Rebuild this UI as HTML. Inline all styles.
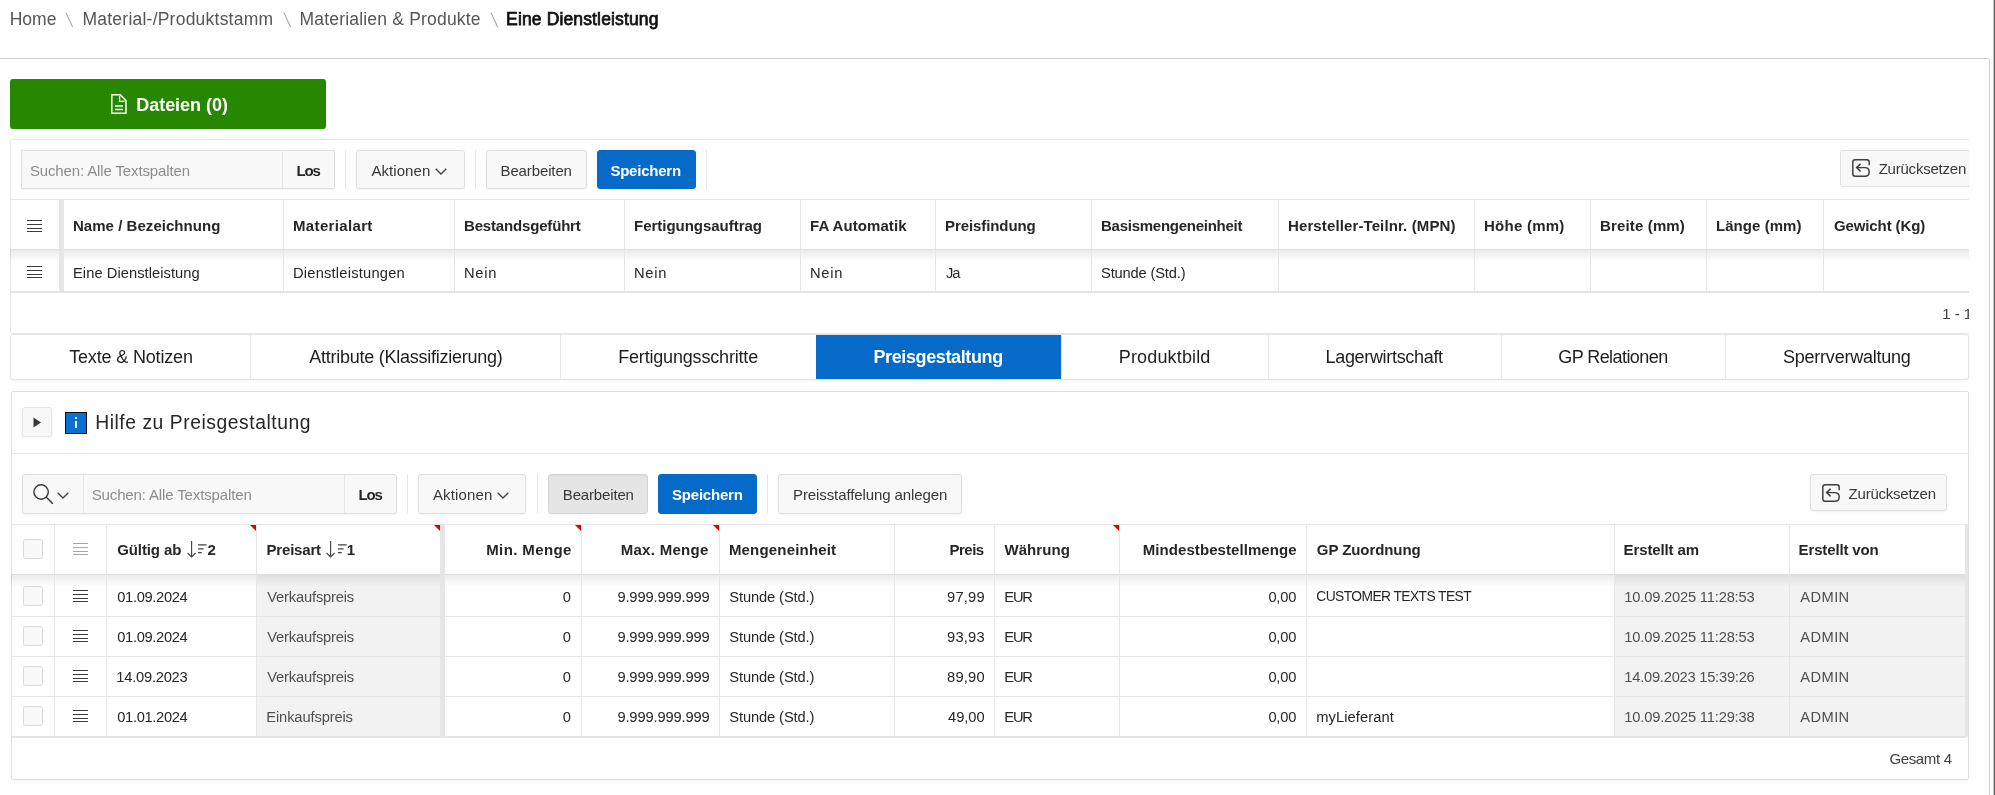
<!DOCTYPE html>
<html><head><meta charset="utf-8"><title>Preisgestaltung</title>
<style>
html,body{margin:0;padding:0;background:#fff;width:1995px;height:795px;overflow:hidden;position:relative;font-family:"Liberation Sans", sans-serif;}
</style></head><body><div style="position:absolute;left:0;top:0;width:1995px;height:795px;overflow:hidden;will-change:transform">
<div style="position:absolute;left:9.70px;top:18.94px;font-size:17.5px;font-weight:400;color:#555555;letter-spacing:0.000px;line-height:0;white-space:nowrap;">Home</div>
<svg style="position:absolute;left:65px;top:12px;overflow:visible" width="9" height="16" viewBox="0 0 9 16"><path d="M1 0.8 L7.6 15" stroke="#a9a9a9" stroke-width="1.1"/></svg>
<div style="position:absolute;left:82.50px;top:18.94px;font-size:17.5px;font-weight:400;color:#555555;letter-spacing:0.229px;line-height:0;white-space:nowrap;">Material-/Produktstamm</div>
<svg style="position:absolute;left:282.5px;top:12px;overflow:visible" width="9" height="16" viewBox="0 0 9 16"><path d="M1 0.8 L7.6 15" stroke="#a9a9a9" stroke-width="1.1"/></svg>
<div style="position:absolute;left:299.50px;top:18.94px;font-size:17.5px;font-weight:400;color:#555555;letter-spacing:0.190px;line-height:0;white-space:nowrap;">Materialien &amp; Produkte</div>
<svg style="position:absolute;left:489.5px;top:12px;overflow:visible" width="9" height="16" viewBox="0 0 9 16"><path d="M1 0.8 L7.6 15" stroke="#a9a9a9" stroke-width="1.1"/></svg>
<div style="position:absolute;left:506.10px;top:18.94px;font-size:17.5px;font-weight:400;color:#111111;letter-spacing:0.139px;line-height:0;white-space:nowrap;-webkit-text-stroke:0.75px #111;">Eine Dienstleistung</div>
<div style="position:absolute;left:-10px;top:58px;width:2000px;height:900px;border:1px solid #d0d0d0;border-radius:2px;box-sizing:border-box;"></div>
<div style="position:absolute;left:1993px;top:0px;width:1px;height:795px;background:#c8c8c8;"></div>
<div style="position:absolute;left:1994px;top:0px;width:1px;height:795px;background:#5a5a5a;"></div>
<div style="position:absolute;left:10px;top:79px;width:316px;height:50px;background:#278701;border-radius:3px;"></div>
<svg style="position:absolute;left:110px;top:93px;overflow:visible" width="18" height="22" viewBox="0 0 18 22"><path d="M1.8 1.8 H10.2 L16 7.6 V20.2 H1.8 Z" fill="none" stroke="#fff" stroke-width="1.5" stroke-linejoin="round"/>
<path d="M9.6 3.2 V8.3 H14.5" fill="none" stroke="#fff" stroke-width="1.3"/>
<path d="M5 13 H13 M5 16.6 H13" stroke="#fff" stroke-width="1.5"/></svg>
<div style="position:absolute;left:136.20px;top:104.76px;font-size:18px;font-weight:700;color:#ffffff;letter-spacing:-0.020px;line-height:0;white-space:nowrap;">Dateien (0)</div>
<div style="position:absolute;left:0;top:0;width:1969px;height:795px;overflow:hidden"><div style="position:absolute;left:10px;top:139px;width:1979px;height:195px;border:1px solid #e6e6e6;border-radius:3px;box-sizing:border-box;"></div></div>
<div style="position:absolute;left:21px;top:150px;width:314px;height:39px;background:#f8f8f8;border:1px solid #dfdfdf;border-radius:3px;box-sizing:border-box;box-shadow:0 1px 2px rgba(0,0,0,.05);border-radius:1px;"></div>
<div style="position:absolute;left:282px;top:151px;width:1px;height:37px;background:#e6e6e6;"></div>
<div style="position:absolute;left:29.90px;top:171.00px;font-size:15px;font-weight:400;color:#8c8c8c;letter-spacing:-0.130px;line-height:0;white-space:nowrap;">Suchen: Alle Textspalten</div>
<div style="position:absolute;left:296.50px;top:171.00px;font-size:15px;font-weight:700;color:#262626;letter-spacing:-1.200px;line-height:0;white-space:nowrap;">Los</div>
<div style="position:absolute;left:345px;top:150px;width:1px;height:39px;background:#e6e6e6;"></div>
<div style="position:absolute;left:356px;top:150px;width:109px;height:39px;background:#f8f8f8;border:1px solid #dfdfdf;border-radius:3px;box-sizing:border-box;box-shadow:0 1px 2px rgba(0,0,0,.05);"></div>
<div style="position:absolute;left:371.40px;top:171.00px;font-size:15px;font-weight:400;color:#383838;letter-spacing:0.071px;line-height:0;white-space:nowrap;">Aktionen</div>
<svg style="position:absolute;left:435px;top:168px;overflow:visible" width="12" height="7" viewBox="0 0 12 7"><path d="M0.7 0.7 L6 6 L11.3 0.7" fill="none" stroke="#404040" stroke-width="1.3"/></svg>
<div style="position:absolute;left:475px;top:150px;width:1px;height:39px;background:#e6e6e6;"></div>
<div style="position:absolute;left:486px;top:150px;width:101px;height:39px;background:#f8f8f8;border:1px solid #dfdfdf;border-radius:3px;box-sizing:border-box;box-shadow:0 1px 2px rgba(0,0,0,.05);"></div>
<div style="position:absolute;left:500.50px;top:171.00px;font-size:15px;font-weight:400;color:#383838;letter-spacing:-0.122px;line-height:0;white-space:nowrap;">Bearbeiten</div>
<div style="position:absolute;left:597px;top:150px;width:99px;height:39px;background:#056ac8;border:1px solid #056ac8;border-radius:3px;box-sizing:border-box;box-shadow:0 1px 2px rgba(0,0,0,.05);"></div>
<div style="position:absolute;left:610.40px;top:171.00px;font-size:15px;font-weight:700;color:#ffffff;letter-spacing:-0.225px;line-height:0;white-space:nowrap;">Speichern</div>
<div style="position:absolute;left:706px;top:150px;width:1px;height:39px;background:#e6e6e6;"></div>
<div style="position:absolute;left:1840px;top:150px;width:129px;height:37px;overflow:hidden"><div style="position:absolute;left:0;top:0;width:145px;height:37px;background:#f8f8f8;border:1px solid #dfdfdf;border-radius:3px;box-sizing:border-box;"></div></div>
<svg style="position:absolute;left:1852px;top:159px;overflow:visible" width="18" height="18" viewBox="0 0 18 18"><path d="M17.2 6.2 V3.3 Q17.2 0.8 14.7 0.8 H3.3 Q0.8 0.8 0.8 3.3 V14.7 Q0.8 17.2 3.3 17.2 H12.9 Q17.2 17.2 17.2 12.9 Q17.2 8.6 12.9 8.6 H4.6" fill="none" stroke="#3e3e3e" stroke-width="1.45"/>
<path d="M8.6 4.9 L4.6 8.6 L8.6 12.4" fill="none" stroke="#3e3e3e" stroke-width="1.45"/></svg>
<div style="position:absolute;left:1878.70px;top:168.80px;font-size:15px;font-weight:400;color:#383838;letter-spacing:-0.227px;line-height:0;white-space:nowrap;">Zurücksetzen</div>
<div style="position:absolute;left:10px;top:199px;width:1959px;height:1px;background:#e6e6e6;"></div>
<div style="position:absolute;left:10px;top:250px;width:1959px;height:12px;background:linear-gradient(rgba(0,0,0,.08),rgba(0,0,0,0));"></div>
<div style="position:absolute;left:10px;top:249px;width:1959px;height:1px;background:#dedede;"></div>
<div style="position:absolute;left:59px;top:200px;width:5px;height:92px;background:#e6e6e6;"></div>
<div style="position:absolute;left:27px;top:220px;width:15px;height:1.4px;background:#3c3c3c;"></div>
<div style="position:absolute;left:27px;top:224px;width:15px;height:1.4px;background:#3c3c3c;"></div>
<div style="position:absolute;left:27px;top:228px;width:15px;height:1.4px;background:#3c3c3c;"></div>
<div style="position:absolute;left:27px;top:231px;width:15px;height:1.4px;background:#3c3c3c;"></div>
<div style="position:absolute;left:27px;top:266px;width:15px;height:1.4px;background:#3c3c3c;"></div>
<div style="position:absolute;left:27px;top:270px;width:15px;height:1.4px;background:#3c3c3c;"></div>
<div style="position:absolute;left:27px;top:274px;width:15px;height:1.4px;background:#3c3c3c;"></div>
<div style="position:absolute;left:27px;top:277px;width:15px;height:1.4px;background:#3c3c3c;"></div>
<div style="position:absolute;left:73.00px;top:225.80px;font-size:15px;font-weight:700;color:#262626;letter-spacing:0.035px;line-height:0;white-space:nowrap;">Name / Bezeichnung</div>
<div style="position:absolute;left:73.00px;top:272.61px;font-size:14.7px;font-weight:400;color:#262626;letter-spacing:0.050px;line-height:0;white-space:nowrap;">Eine Dienstleistung</div>
<div style="position:absolute;left:283px;top:200px;width:1px;height:92px;background:#e6e6e6;"></div>
<div style="position:absolute;left:293.00px;top:225.80px;font-size:15px;font-weight:700;color:#262626;letter-spacing:0.350px;line-height:0;white-space:nowrap;">Materialart</div>
<div style="position:absolute;left:293.00px;top:272.61px;font-size:14.7px;font-weight:400;color:#262626;letter-spacing:0.207px;line-height:0;white-space:nowrap;">Dienstleistungen</div>
<div style="position:absolute;left:454px;top:200px;width:1px;height:92px;background:#e6e6e6;"></div>
<div style="position:absolute;left:464.00px;top:225.80px;font-size:15px;font-weight:700;color:#262626;letter-spacing:-0.171px;line-height:0;white-space:nowrap;">Bestandsgeführt</div>
<div style="position:absolute;left:464.00px;top:272.61px;font-size:14.7px;font-weight:400;color:#262626;letter-spacing:0.767px;line-height:0;white-space:nowrap;">Nein</div>
<div style="position:absolute;left:624px;top:200px;width:1px;height:92px;background:#e6e6e6;"></div>
<div style="position:absolute;left:634.00px;top:225.80px;font-size:15px;font-weight:700;color:#262626;letter-spacing:-0.025px;line-height:0;white-space:nowrap;">Fertigungsauftrag</div>
<div style="position:absolute;left:634.00px;top:272.61px;font-size:14.7px;font-weight:400;color:#262626;letter-spacing:0.767px;line-height:0;white-space:nowrap;">Nein</div>
<div style="position:absolute;left:800px;top:200px;width:1px;height:92px;background:#e6e6e6;"></div>
<div style="position:absolute;left:810.00px;top:225.80px;font-size:15px;font-weight:700;color:#262626;letter-spacing:0.091px;line-height:0;white-space:nowrap;">FA Automatik</div>
<div style="position:absolute;left:810.00px;top:272.61px;font-size:14.7px;font-weight:400;color:#262626;letter-spacing:0.767px;line-height:0;white-space:nowrap;">Nein</div>
<div style="position:absolute;left:935px;top:200px;width:1px;height:92px;background:#e6e6e6;"></div>
<div style="position:absolute;left:945.00px;top:225.80px;font-size:15px;font-weight:700;color:#262626;letter-spacing:-0.082px;line-height:0;white-space:nowrap;">Preisfindung</div>
<div style="position:absolute;left:946.00px;top:272.61px;font-size:14.7px;font-weight:400;color:#262626;letter-spacing:-1.200px;line-height:0;white-space:nowrap;">Ja</div>
<div style="position:absolute;left:1091px;top:200px;width:1px;height:92px;background:#e6e6e6;"></div>
<div style="position:absolute;left:1101.00px;top:225.80px;font-size:15px;font-weight:700;color:#262626;letter-spacing:-0.259px;line-height:0;white-space:nowrap;">Basismengeneinheit</div>
<div style="position:absolute;left:1101.00px;top:272.61px;font-size:14.7px;font-weight:400;color:#262626;letter-spacing:-0.167px;line-height:0;white-space:nowrap;">Stunde (Std.)</div>
<div style="position:absolute;left:1278px;top:200px;width:1px;height:92px;background:#e6e6e6;"></div>
<div style="position:absolute;left:1288.00px;top:225.80px;font-size:15px;font-weight:700;color:#262626;letter-spacing:0.117px;line-height:0;white-space:nowrap;">Hersteller-Teilnr. (MPN)</div>
<div style="position:absolute;left:1474px;top:200px;width:1px;height:92px;background:#e6e6e6;"></div>
<div style="position:absolute;left:1484.00px;top:225.80px;font-size:15px;font-weight:700;color:#262626;letter-spacing:0.250px;line-height:0;white-space:nowrap;">Höhe (mm)</div>
<div style="position:absolute;left:1590px;top:200px;width:1px;height:92px;background:#e6e6e6;"></div>
<div style="position:absolute;left:1600.00px;top:225.80px;font-size:15px;font-weight:700;color:#262626;letter-spacing:0.150px;line-height:0;white-space:nowrap;">Breite (mm)</div>
<div style="position:absolute;left:1706px;top:200px;width:1px;height:92px;background:#e6e6e6;"></div>
<div style="position:absolute;left:1716.00px;top:225.80px;font-size:15px;font-weight:700;color:#262626;letter-spacing:0.056px;line-height:0;white-space:nowrap;">Länge (mm)</div>
<div style="position:absolute;left:1823px;top:200px;width:1px;height:92px;background:#e6e6e6;"></div>
<div style="position:absolute;left:1834.00px;top:225.80px;font-size:15px;font-weight:700;color:#262626;letter-spacing:-0.118px;line-height:0;white-space:nowrap;">Gewicht (Kg)</div>
<div style="position:absolute;left:10px;top:291px;width:1959px;height:2px;background:#e4e4e4;"></div>
<div style="position:absolute;left:1942.20px;top:313.80px;font-size:15px;font-weight:400;color:#404040;letter-spacing:0.000px;line-height:0;white-space:nowrap;">1 - 1</div>
<div style="position:absolute;left:1969px;top:300px;width:19px;height:30px;background:#fff;"></div>
<div style="position:absolute;left:10px;top:334px;width:1959px;height:46px;border:1px solid #e6e6e6;border-radius:3px;box-sizing:border-box;background:#fff;box-shadow:0 1px 2px rgba(0,0,0,.05)"></div>
<div style="position:absolute;left:69.20px;top:356.56px;font-size:18px;font-weight:400;color:#1e1e1e;letter-spacing:-0.164px;line-height:0;white-space:nowrap;">Texte &amp; Notizen</div>
<div style="position:absolute;left:250px;top:335px;width:1px;height:44px;background:#e6e6e6;"></div>
<div style="position:absolute;left:309.20px;top:356.56px;font-size:18px;font-weight:400;color:#1e1e1e;letter-spacing:-0.250px;line-height:0;white-space:nowrap;">Attribute (Klassifizierung)</div>
<div style="position:absolute;left:560px;top:335px;width:1px;height:44px;background:#e6e6e6;"></div>
<div style="position:absolute;left:618.20px;top:356.56px;font-size:18px;font-weight:400;color:#1e1e1e;letter-spacing:-0.182px;line-height:0;white-space:nowrap;">Fertigungsschritte</div>
<div style="position:absolute;left:816px;top:335px;width:245px;height:44px;background:#056ac8;"></div>
<div style="position:absolute;left:873.50px;top:356.56px;font-size:18px;font-weight:700;color:#ffffff;letter-spacing:-0.386px;line-height:0;white-space:nowrap;">Preisgestaltung</div>
<div style="position:absolute;left:1061px;top:335px;width:1px;height:44px;background:#e6e6e6;"></div>
<div style="position:absolute;left:1118.80px;top:356.56px;font-size:18px;font-weight:400;color:#1e1e1e;letter-spacing:0.150px;line-height:0;white-space:nowrap;">Produktbild</div>
<div style="position:absolute;left:1268px;top:335px;width:1px;height:44px;background:#e6e6e6;"></div>
<div style="position:absolute;left:1325.50px;top:356.56px;font-size:18px;font-weight:400;color:#1e1e1e;letter-spacing:-0.321px;line-height:0;white-space:nowrap;">Lagerwirtschaft</div>
<div style="position:absolute;left:1501px;top:335px;width:1px;height:44px;background:#e6e6e6;"></div>
<div style="position:absolute;left:1558.20px;top:356.56px;font-size:18px;font-weight:400;color:#1e1e1e;letter-spacing:-0.558px;line-height:0;white-space:nowrap;">GP Relationen</div>
<div style="position:absolute;left:1725px;top:335px;width:1px;height:44px;background:#e6e6e6;"></div>
<div style="position:absolute;left:1783.00px;top:356.56px;font-size:18px;font-weight:400;color:#1e1e1e;letter-spacing:-0.229px;line-height:0;white-space:nowrap;">Sperrverwaltung</div>
<div style="position:absolute;left:11px;top:391px;width:1958px;height:389px;border:1px solid #e0e0e0;border-radius:2px;box-sizing:border-box;background:#fff;box-shadow:0 1px 3px rgba(0,0,0,.06)"></div>
<div style="position:absolute;left:22px;top:407px;width:30px;height:30px;background:#f8f8f8;border:1px solid #e4e4e4;border-radius:3px;box-sizing:border-box;box-shadow:0 1px 2px rgba(0,0,0,.05);"></div>
<svg style="position:absolute;left:33px;top:417px;overflow:visible" width="9" height="11" viewBox="0 0 9 11"><path d="M0.5 0.5 L8 5.5 L0.5 10.5 Z" fill="#383838"/></svg>
<div style="position:absolute;left:64.5px;top:411.8px;width:22.5px;height:22px;background:#0a70d6;border:1.6px solid #111;box-sizing:border-box;"></div>
<div style="position:absolute;left:75.1px;top:417.3px;width:1.5px;height:1.6px;background:#fff;"></div>
<div style="position:absolute;left:75.1px;top:420.6px;width:1.5px;height:7.2px;background:#fff;"></div>
<div style="position:absolute;left:95.20px;top:423.11px;font-size:19.3px;font-weight:400;color:#262626;letter-spacing:0.552px;line-height:0;white-space:nowrap;">Hilfe zu Preisgestaltung</div>
<div style="position:absolute;left:11px;top:453px;width:1958px;height:1px;background:#e6e6e6;"></div>
<div style="position:absolute;left:22px;top:474px;width:375px;height:39.5px;background:#f8f8f8;border:1px solid #dfdfdf;border-radius:3px;box-sizing:border-box;box-shadow:0 1px 2px rgba(0,0,0,.05);"></div>
<div style="position:absolute;left:83px;top:475px;width:1px;height:37.5px;background:#e6e6e6;"></div>
<div style="position:absolute;left:344px;top:475px;width:1px;height:37.5px;background:#e6e6e6;"></div>
<svg style="position:absolute;left:31px;top:483px;overflow:visible" width="24" height="22" viewBox="0 0 24 22"><circle cx="10.1" cy="9" r="7.2" fill="none" stroke="#383838" stroke-width="1.4"/><path d="M15.4 14.3 L21.8 20.7" stroke="#383838" stroke-width="1.5"/></svg>
<svg style="position:absolute;left:57.2px;top:491.7px;overflow:visible" width="12" height="7" viewBox="0 0 12 7"><path d="M0.7 0.7 L6 6 L11.3 0.7" fill="none" stroke="#404040" stroke-width="1.3"/></svg>
<div style="position:absolute;left:91.70px;top:494.80px;font-size:15px;font-weight:400;color:#8c8c8c;letter-spacing:-0.135px;line-height:0;white-space:nowrap;">Suchen: Alle Textspalten</div>
<div style="position:absolute;left:358.60px;top:494.80px;font-size:15px;font-weight:700;color:#262626;letter-spacing:-1.200px;line-height:0;white-space:nowrap;">Los</div>
<div style="position:absolute;left:407px;top:474px;width:1px;height:39px;background:#e6e6e6;"></div>
<div style="position:absolute;left:418px;top:474px;width:108px;height:39.6px;background:#f8f8f8;border:1px solid #dfdfdf;border-radius:3px;box-sizing:border-box;box-shadow:0 1px 2px rgba(0,0,0,.05);"></div>
<div style="position:absolute;left:432.90px;top:494.70px;font-size:15px;font-weight:400;color:#383838;letter-spacing:0.143px;line-height:0;white-space:nowrap;">Aktionen</div>
<svg style="position:absolute;left:496.5px;top:491.5px;overflow:visible" width="12" height="7" viewBox="0 0 12 7"><path d="M0.7 0.7 L6 6 L11.3 0.7" fill="none" stroke="#404040" stroke-width="1.3"/></svg>
<div style="position:absolute;left:537px;top:474px;width:1px;height:39px;background:#e6e6e6;"></div>
<div style="position:absolute;left:548px;top:474px;width:100px;height:39.6px;background:#e5e5e5;border:1px solid #d4d4d4;border-radius:3px;box-sizing:border-box;box-shadow:0 1px 2px rgba(0,0,0,.05);box-shadow:inset 0 1px 1px rgba(0,0,0,.05);"></div>
<div style="position:absolute;left:562.80px;top:494.70px;font-size:15px;font-weight:400;color:#383838;letter-spacing:-0.156px;line-height:0;white-space:nowrap;">Bearbeiten</div>
<div style="position:absolute;left:658px;top:474px;width:99px;height:39.6px;background:#056ac8;border:1px solid #056ac8;border-radius:3px;box-sizing:border-box;box-shadow:0 1px 2px rgba(0,0,0,.05);"></div>
<div style="position:absolute;left:672.10px;top:494.70px;font-size:15px;font-weight:700;color:#ffffff;letter-spacing:-0.225px;line-height:0;white-space:nowrap;">Speichern</div>
<div style="position:absolute;left:767px;top:474px;width:1px;height:39px;background:#e6e6e6;"></div>
<div style="position:absolute;left:778px;top:474px;width:184px;height:39.6px;background:#f8f8f8;border:1px solid #dfdfdf;border-radius:3px;box-sizing:border-box;box-shadow:0 1px 2px rgba(0,0,0,.05);"></div>
<div style="position:absolute;left:793.00px;top:494.80px;font-size:15px;font-weight:400;color:#383838;letter-spacing:-0.100px;line-height:0;white-space:nowrap;">Preisstaffelung anlegen</div>
<div style="position:absolute;left:1810px;top:474px;width:137px;height:37px;background:#f8f8f8;border:1px solid #dfdfdf;border-radius:3px;box-sizing:border-box;box-shadow:0 1px 2px rgba(0,0,0,.05);"></div>
<svg style="position:absolute;left:1822px;top:484px;overflow:visible" width="18" height="18" viewBox="0 0 18 18"><path d="M17.2 6.2 V3.3 Q17.2 0.8 14.7 0.8 H3.3 Q0.8 0.8 0.8 3.3 V14.7 Q0.8 17.2 3.3 17.2 H12.9 Q17.2 17.2 17.2 12.9 Q17.2 8.6 12.9 8.6 H4.6" fill="none" stroke="#3e3e3e" stroke-width="1.45"/>
<path d="M8.6 4.9 L4.6 8.6 L8.6 12.4" fill="none" stroke="#3e3e3e" stroke-width="1.45"/></svg>
<div style="position:absolute;left:1848.60px;top:493.60px;font-size:15px;font-weight:400;color:#383838;letter-spacing:-0.236px;line-height:0;white-space:nowrap;">Zurücksetzen</div>
<div style="position:absolute;left:11px;top:524px;width:1958px;height:1px;background:#e6e6e6;"></div>
<div style="position:absolute;left:256px;top:575px;width:184px;height:162px;background:#f2f2f2;"></div>
<div style="position:absolute;left:1614px;top:575px;width:175px;height:162px;background:#f2f2f2;"></div>
<div style="position:absolute;left:1789px;top:575px;width:176px;height:162px;background:#f2f2f2;"></div>
<div style="position:absolute;left:11px;top:575px;width:1955px;height:12px;background:linear-gradient(rgba(0,0,0,.08),rgba(0,0,0,0));"></div>
<div style="position:absolute;left:11px;top:574px;width:1955px;height:1px;background:#dedede;"></div>
<div style="position:absolute;left:11px;top:616px;width:1955px;height:1px;background:#e6e6e6;"></div>
<div style="position:absolute;left:11px;top:656px;width:1955px;height:1px;background:#e6e6e6;"></div>
<div style="position:absolute;left:11px;top:696px;width:1955px;height:1px;background:#e6e6e6;"></div>
<div style="position:absolute;left:11px;top:736px;width:1955px;height:2px;background:#e4e4e4;"></div>
<div style="position:absolute;left:54px;top:525px;width:1px;height:212px;background:#e6e6e6;"></div>
<div style="position:absolute;left:106px;top:525px;width:1px;height:212px;background:#e6e6e6;"></div>
<div style="position:absolute;left:440px;top:525px;width:5px;height:212px;background:#e6e6e6;"></div>
<div style="position:absolute;left:256px;top:525px;width:1px;height:212px;background:#e6e6e6;"></div>
<div style="position:absolute;left:581px;top:525px;width:1px;height:212px;background:#e6e6e6;"></div>
<div style="position:absolute;left:719px;top:525px;width:1px;height:212px;background:#e6e6e6;"></div>
<div style="position:absolute;left:894px;top:525px;width:1px;height:212px;background:#e6e6e6;"></div>
<div style="position:absolute;left:994px;top:525px;width:1px;height:212px;background:#e6e6e6;"></div>
<div style="position:absolute;left:1119px;top:525px;width:1px;height:212px;background:#e6e6e6;"></div>
<div style="position:absolute;left:1306px;top:525px;width:1px;height:212px;background:#e6e6e6;"></div>
<div style="position:absolute;left:1614px;top:525px;width:1px;height:212px;background:#e6e6e6;"></div>
<div style="position:absolute;left:1789px;top:525px;width:1px;height:212px;background:#e6e6e6;"></div>
<div style="position:absolute;left:1965px;top:525px;width:3px;height:212px;background:#e6e6e6;"></div>
<div style="position:absolute;left:23px;top:539px;width:20px;height:20px;background:#f8f8f8;border:1px solid #d8d8d8;border-radius:2.5px;box-sizing:border-box;"></div>
<div style="position:absolute;left:73px;top:543px;width:15px;height:1.4px;background:#a6a6a6;"></div>
<div style="position:absolute;left:73px;top:547px;width:15px;height:1.4px;background:#a6a6a6;"></div>
<div style="position:absolute;left:73px;top:551px;width:15px;height:1.4px;background:#a6a6a6;"></div>
<div style="position:absolute;left:73px;top:554px;width:15px;height:1.4px;background:#a6a6a6;"></div>
<div style="position:absolute;left:23px;top:586px;width:20px;height:20px;background:#f8f8f8;border:1px solid #d8d8d8;border-radius:2.5px;box-sizing:border-box;"></div>
<div style="position:absolute;left:73px;top:590px;width:15px;height:1.4px;background:#3c3c3c;"></div>
<div style="position:absolute;left:73px;top:594px;width:15px;height:1.4px;background:#3c3c3c;"></div>
<div style="position:absolute;left:73px;top:598px;width:15px;height:1.4px;background:#3c3c3c;"></div>
<div style="position:absolute;left:73px;top:601px;width:15px;height:1.4px;background:#3c3c3c;"></div>
<div style="position:absolute;left:23px;top:626px;width:20px;height:20px;background:#f8f8f8;border:1px solid #d8d8d8;border-radius:2.5px;box-sizing:border-box;"></div>
<div style="position:absolute;left:73px;top:630px;width:15px;height:1.4px;background:#3c3c3c;"></div>
<div style="position:absolute;left:73px;top:634px;width:15px;height:1.4px;background:#3c3c3c;"></div>
<div style="position:absolute;left:73px;top:638px;width:15px;height:1.4px;background:#3c3c3c;"></div>
<div style="position:absolute;left:73px;top:641px;width:15px;height:1.4px;background:#3c3c3c;"></div>
<div style="position:absolute;left:23px;top:666px;width:20px;height:20px;background:#f8f8f8;border:1px solid #d8d8d8;border-radius:2.5px;box-sizing:border-box;"></div>
<div style="position:absolute;left:73px;top:670px;width:15px;height:1.4px;background:#3c3c3c;"></div>
<div style="position:absolute;left:73px;top:674px;width:15px;height:1.4px;background:#3c3c3c;"></div>
<div style="position:absolute;left:73px;top:678px;width:15px;height:1.4px;background:#3c3c3c;"></div>
<div style="position:absolute;left:73px;top:681px;width:15px;height:1.4px;background:#3c3c3c;"></div>
<div style="position:absolute;left:23px;top:706px;width:20px;height:20px;background:#f8f8f8;border:1px solid #d8d8d8;border-radius:2.5px;box-sizing:border-box;"></div>
<div style="position:absolute;left:73px;top:710px;width:15px;height:1.4px;background:#3c3c3c;"></div>
<div style="position:absolute;left:73px;top:714px;width:15px;height:1.4px;background:#3c3c3c;"></div>
<div style="position:absolute;left:73px;top:718px;width:15px;height:1.4px;background:#3c3c3c;"></div>
<div style="position:absolute;left:73px;top:721px;width:15px;height:1.4px;background:#3c3c3c;"></div>
<div style="position:absolute;left:117.20px;top:550.00px;font-size:15px;font-weight:700;color:#262626;letter-spacing:-0.100px;line-height:0;white-space:nowrap;">Gültig ab</div>
<div style="position:absolute;left:266.50px;top:550.00px;font-size:15px;font-weight:700;color:#262626;letter-spacing:-0.186px;line-height:0;white-space:nowrap;">Preisart</div>
<div style="position:absolute;left:486.20px;top:550.00px;font-size:15px;font-weight:700;color:#262626;letter-spacing:0.400px;line-height:0;white-space:nowrap;">Min. Menge</div>
<div style="position:absolute;left:620.70px;top:550.00px;font-size:15px;font-weight:700;color:#262626;letter-spacing:0.289px;line-height:0;white-space:nowrap;">Max. Menge</div>
<div style="position:absolute;left:728.90px;top:550.00px;font-size:15px;font-weight:700;color:#262626;letter-spacing:0.183px;line-height:0;white-space:nowrap;">Mengeneinheit</div>
<div style="position:absolute;left:949.40px;top:550.00px;font-size:15px;font-weight:700;color:#262626;letter-spacing:-0.475px;line-height:0;white-space:nowrap;">Preis</div>
<div style="position:absolute;left:1004.40px;top:550.00px;font-size:15px;font-weight:700;color:#262626;letter-spacing:0.100px;line-height:0;white-space:nowrap;">Währung</div>
<div style="position:absolute;left:1142.80px;top:550.00px;font-size:15px;font-weight:700;color:#262626;letter-spacing:0.067px;line-height:0;white-space:nowrap;">Mindestbestellmenge</div>
<div style="position:absolute;left:1316.80px;top:550.00px;font-size:15px;font-weight:700;color:#262626;letter-spacing:-0.073px;line-height:0;white-space:nowrap;">GP Zuordnung</div>
<div style="position:absolute;left:1623.60px;top:550.00px;font-size:15px;font-weight:700;color:#262626;letter-spacing:-0.120px;line-height:0;white-space:nowrap;">Erstellt am</div>
<div style="position:absolute;left:1798.60px;top:550.00px;font-size:15px;font-weight:700;color:#262626;letter-spacing:-0.145px;line-height:0;white-space:nowrap;">Erstellt von</div>
<svg style="position:absolute;left:186.8px;top:541px;overflow:visible" width="10" height="17" viewBox="0 0 10 17"><path d="M4.6 0 V16 M0.6 12 L4.6 16 L8.6 12" fill="none" stroke="#444" stroke-width="1.15"/></svg>
<svg style="position:absolute;left:198.3px;top:543.8px;overflow:visible" width="10" height="10" viewBox="0 0 10 10"><path d="M0 0.8 H8.6 M0 4.8 H5.6 M0 8.7 H3.8" stroke="#444" stroke-width="1.2"/></svg>
<div style="position:absolute;left:207.50px;top:550.00px;font-size:15px;font-weight:700;color:#262626;letter-spacing:0.000px;line-height:0;white-space:nowrap;">2</div>
<svg style="position:absolute;left:326.2px;top:541px;overflow:visible" width="10" height="17" viewBox="0 0 10 17"><path d="M4.6 0 V16 M0.6 12 L4.6 16 L8.6 12" fill="none" stroke="#444" stroke-width="1.15"/></svg>
<svg style="position:absolute;left:337.7px;top:543.8px;overflow:visible" width="10" height="10" viewBox="0 0 10 10"><path d="M0 0.8 H8.6 M0 4.8 H5.6 M0 8.7 H3.8" stroke="#444" stroke-width="1.2"/></svg>
<div style="position:absolute;left:346.70px;top:550.00px;font-size:15px;font-weight:700;color:#262626;letter-spacing:0.000px;line-height:0;white-space:nowrap;">1</div>
<div style="position:absolute;left:249.5px;top:525px;width:0;height:0;border-top:6.5px solid #dc0000;border-left:6.5px solid transparent;"></div>
<div style="position:absolute;left:433.5px;top:525px;width:0;height:0;border-top:6.5px solid #dc0000;border-left:6.5px solid transparent;"></div>
<div style="position:absolute;left:574.5px;top:525px;width:0;height:0;border-top:6.5px solid #dc0000;border-left:6.5px solid transparent;"></div>
<div style="position:absolute;left:712.5px;top:525px;width:0;height:0;border-top:6.5px solid #dc0000;border-left:6.5px solid transparent;"></div>
<div style="position:absolute;left:1112.5px;top:525px;width:0;height:0;border-top:6.5px solid #dc0000;border-left:6.5px solid transparent;"></div>
<div style="position:absolute;left:117.30px;top:596.91px;font-size:14.7px;font-weight:400;color:#262626;letter-spacing:-0.344px;line-height:0;white-space:nowrap;">01.09.2024</div>
<div style="position:absolute;left:267.30px;top:596.91px;font-size:14.7px;font-weight:400;color:#4f4f4f;letter-spacing:-0.175px;line-height:0;white-space:nowrap;">Verkaufspreis</div>
<div style="position:absolute;left:562.80px;top:596.91px;font-size:14.7px;font-weight:400;color:#262626;letter-spacing:0.000px;line-height:0;white-space:nowrap;">0</div>
<div style="position:absolute;left:617.40px;top:596.91px;font-size:14.7px;font-weight:400;color:#262626;letter-spacing:-0.133px;line-height:0;white-space:nowrap;">9.999.999.999</div>
<div style="position:absolute;left:729.30px;top:596.91px;font-size:14.7px;font-weight:400;color:#262626;letter-spacing:-0.117px;line-height:0;white-space:nowrap;">Stunde (Std.)</div>
<div style="position:absolute;left:947.10px;top:596.91px;font-size:14.7px;font-weight:400;color:#262626;letter-spacing:0.175px;line-height:0;white-space:nowrap;">97,99</div>
<div style="position:absolute;left:1004.30px;top:596.91px;font-size:14.7px;font-weight:400;color:#262626;letter-spacing:-1.200px;line-height:0;white-space:nowrap;">EUR</div>
<div style="position:absolute;left:1268.40px;top:596.91px;font-size:14.7px;font-weight:400;color:#262626;letter-spacing:-0.200px;line-height:0;white-space:nowrap;">0,00</div>
<div style="position:absolute;left:1316.30px;top:597.22px;font-size:13.8px;font-weight:400;color:#262626;letter-spacing:-0.572px;line-height:0;white-space:nowrap;">CUSTOMER TEXTS TEST</div>
<div style="position:absolute;left:1624.30px;top:596.91px;font-size:14.7px;font-weight:400;color:#4f4f4f;letter-spacing:-0.183px;line-height:0;white-space:nowrap;">10.09.2025 11:28:53</div>
<div style="position:absolute;left:1800.30px;top:596.91px;font-size:14.7px;font-weight:400;color:#4f4f4f;letter-spacing:0.400px;line-height:0;white-space:nowrap;">ADMIN</div>
<div style="position:absolute;left:117.30px;top:636.91px;font-size:14.7px;font-weight:400;color:#262626;letter-spacing:-0.344px;line-height:0;white-space:nowrap;">01.09.2024</div>
<div style="position:absolute;left:267.30px;top:636.91px;font-size:14.7px;font-weight:400;color:#4f4f4f;letter-spacing:-0.175px;line-height:0;white-space:nowrap;">Verkaufspreis</div>
<div style="position:absolute;left:562.80px;top:636.91px;font-size:14.7px;font-weight:400;color:#262626;letter-spacing:0.000px;line-height:0;white-space:nowrap;">0</div>
<div style="position:absolute;left:617.40px;top:636.91px;font-size:14.7px;font-weight:400;color:#262626;letter-spacing:-0.133px;line-height:0;white-space:nowrap;">9.999.999.999</div>
<div style="position:absolute;left:729.30px;top:636.91px;font-size:14.7px;font-weight:400;color:#262626;letter-spacing:-0.117px;line-height:0;white-space:nowrap;">Stunde (Std.)</div>
<div style="position:absolute;left:947.10px;top:636.91px;font-size:14.7px;font-weight:400;color:#262626;letter-spacing:0.175px;line-height:0;white-space:nowrap;">93,93</div>
<div style="position:absolute;left:1004.30px;top:636.91px;font-size:14.7px;font-weight:400;color:#262626;letter-spacing:-1.200px;line-height:0;white-space:nowrap;">EUR</div>
<div style="position:absolute;left:1268.40px;top:636.91px;font-size:14.7px;font-weight:400;color:#262626;letter-spacing:-0.200px;line-height:0;white-space:nowrap;">0,00</div>
<div style="position:absolute;left:1624.30px;top:636.91px;font-size:14.7px;font-weight:400;color:#4f4f4f;letter-spacing:-0.183px;line-height:0;white-space:nowrap;">10.09.2025 11:28:53</div>
<div style="position:absolute;left:1800.30px;top:636.91px;font-size:14.7px;font-weight:400;color:#4f4f4f;letter-spacing:0.400px;line-height:0;white-space:nowrap;">ADMIN</div>
<div style="position:absolute;left:116.30px;top:676.91px;font-size:14.7px;font-weight:400;color:#262626;letter-spacing:-0.233px;line-height:0;white-space:nowrap;">14.09.2023</div>
<div style="position:absolute;left:267.30px;top:676.91px;font-size:14.7px;font-weight:400;color:#4f4f4f;letter-spacing:-0.175px;line-height:0;white-space:nowrap;">Verkaufspreis</div>
<div style="position:absolute;left:562.80px;top:676.91px;font-size:14.7px;font-weight:400;color:#262626;letter-spacing:0.000px;line-height:0;white-space:nowrap;">0</div>
<div style="position:absolute;left:617.40px;top:676.91px;font-size:14.7px;font-weight:400;color:#262626;letter-spacing:-0.133px;line-height:0;white-space:nowrap;">9.999.999.999</div>
<div style="position:absolute;left:729.30px;top:676.91px;font-size:14.7px;font-weight:400;color:#262626;letter-spacing:-0.117px;line-height:0;white-space:nowrap;">Stunde (Std.)</div>
<div style="position:absolute;left:947.10px;top:676.91px;font-size:14.7px;font-weight:400;color:#262626;letter-spacing:0.175px;line-height:0;white-space:nowrap;">89,90</div>
<div style="position:absolute;left:1004.30px;top:676.91px;font-size:14.7px;font-weight:400;color:#262626;letter-spacing:-1.200px;line-height:0;white-space:nowrap;">EUR</div>
<div style="position:absolute;left:1268.40px;top:676.91px;font-size:14.7px;font-weight:400;color:#262626;letter-spacing:-0.200px;line-height:0;white-space:nowrap;">0,00</div>
<div style="position:absolute;left:1624.30px;top:676.91px;font-size:14.7px;font-weight:400;color:#4f4f4f;letter-spacing:-0.239px;line-height:0;white-space:nowrap;">14.09.2023 15:39:26</div>
<div style="position:absolute;left:1800.30px;top:676.91px;font-size:14.7px;font-weight:400;color:#4f4f4f;letter-spacing:0.400px;line-height:0;white-space:nowrap;">ADMIN</div>
<div style="position:absolute;left:117.30px;top:716.91px;font-size:14.7px;font-weight:400;color:#262626;letter-spacing:-0.344px;line-height:0;white-space:nowrap;">01.01.2024</div>
<div style="position:absolute;left:266.30px;top:716.91px;font-size:14.7px;font-weight:400;color:#4f4f4f;letter-spacing:-0.125px;line-height:0;white-space:nowrap;">Einkaufspreis</div>
<div style="position:absolute;left:562.80px;top:716.91px;font-size:14.7px;font-weight:400;color:#262626;letter-spacing:0.000px;line-height:0;white-space:nowrap;">0</div>
<div style="position:absolute;left:617.40px;top:716.91px;font-size:14.7px;font-weight:400;color:#262626;letter-spacing:-0.133px;line-height:0;white-space:nowrap;">9.999.999.999</div>
<div style="position:absolute;left:729.30px;top:716.91px;font-size:14.7px;font-weight:400;color:#262626;letter-spacing:-0.117px;line-height:0;white-space:nowrap;">Stunde (Std.)</div>
<div style="position:absolute;left:948.10px;top:716.91px;font-size:14.7px;font-weight:400;color:#262626;letter-spacing:-0.075px;line-height:0;white-space:nowrap;">49,00</div>
<div style="position:absolute;left:1004.30px;top:716.91px;font-size:14.7px;font-weight:400;color:#262626;letter-spacing:-1.200px;line-height:0;white-space:nowrap;">EUR</div>
<div style="position:absolute;left:1268.40px;top:716.91px;font-size:14.7px;font-weight:400;color:#262626;letter-spacing:-0.200px;line-height:0;white-space:nowrap;">0,00</div>
<div style="position:absolute;left:1316.30px;top:716.91px;font-size:14.7px;font-weight:400;color:#262626;letter-spacing:0.070px;line-height:0;white-space:nowrap;">myLieferant</div>
<div style="position:absolute;left:1624.30px;top:716.91px;font-size:14.7px;font-weight:400;color:#4f4f4f;letter-spacing:-0.183px;line-height:0;white-space:nowrap;">10.09.2025 11:29:38</div>
<div style="position:absolute;left:1800.30px;top:716.91px;font-size:14.7px;font-weight:400;color:#4f4f4f;letter-spacing:0.400px;line-height:0;white-space:nowrap;">ADMIN</div>
<div style="position:absolute;left:1889.40px;top:759.10px;font-size:15px;font-weight:400;color:#404040;letter-spacing:-0.343px;line-height:0;white-space:nowrap;">Gesamt 4</div>
</div></body></html>
